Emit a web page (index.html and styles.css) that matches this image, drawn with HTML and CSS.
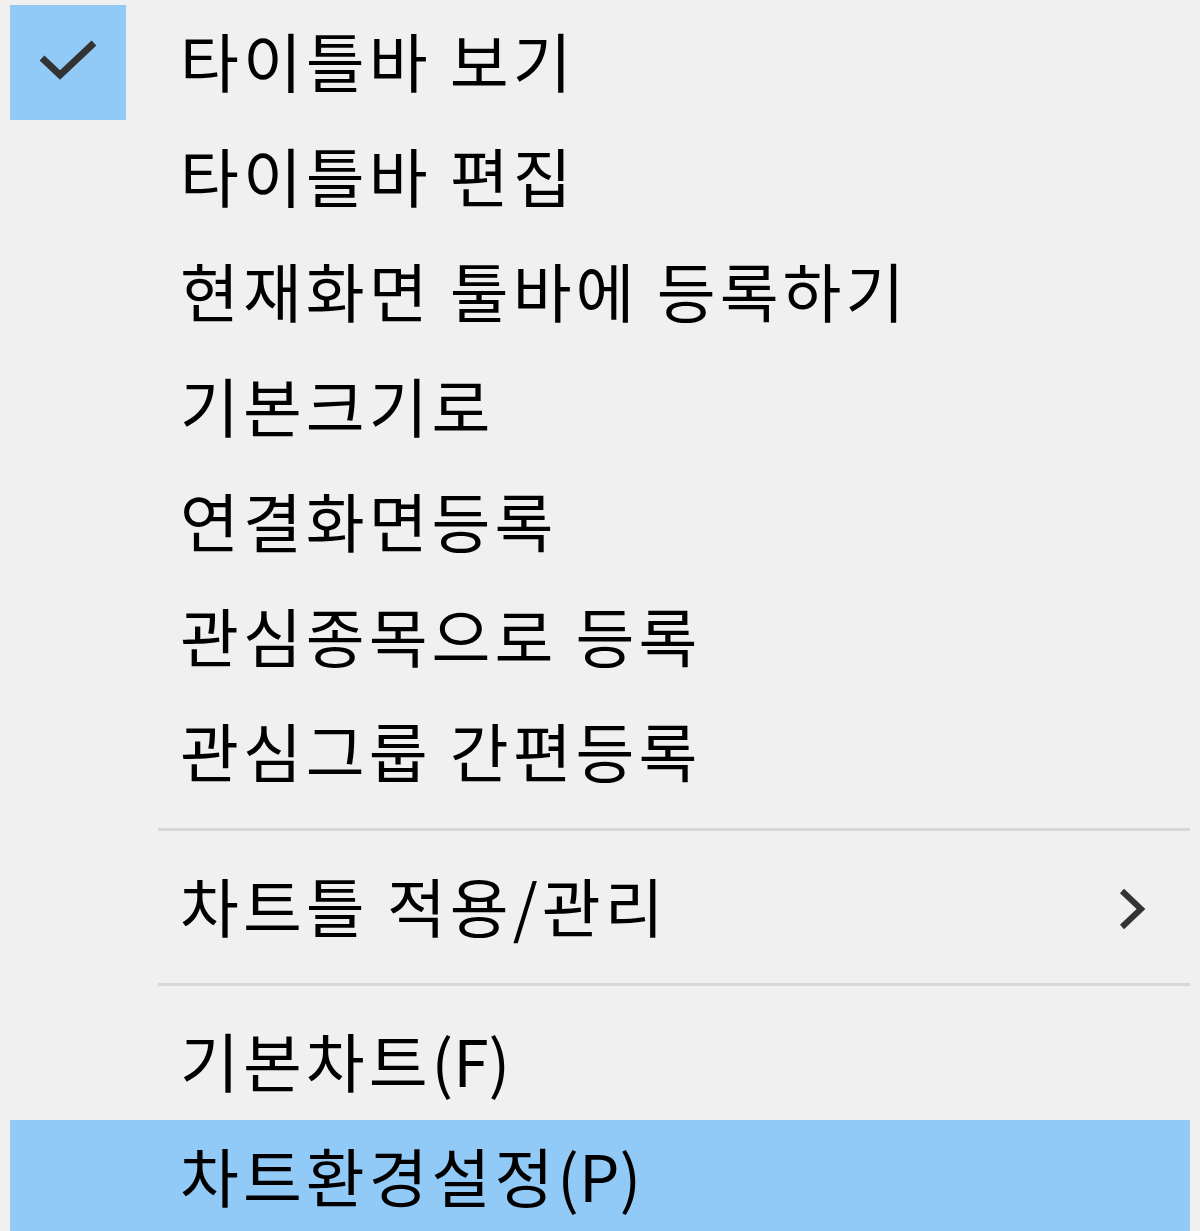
FILE: index.html
```html
<!DOCTYPE html>
<html>
<head>
    <meta charset="utf-8">
    <link rel="stylesheet" href="styles.css">
</head>
<body>
    <div class="menu">
        <div class="menu-item">
            <div class="gutter">
                <div class="check-box">
                    <svg width="116" height="115" viewBox="0 0 116 115">
                        <path d="M32 53 L50 70 L84 38" fill="none" stroke="#333" stroke-width="7"/>
                    </svg>
                </div>
            </div>
            <span class="label">타이틀바 보기</span>
        </div>
        <div class="menu-item">
            <div class="gutter"></div>
            <span class="label">타이틀바 편집</span>
        </div>
        <div class="menu-item">
            <div class="gutter"></div>
            <span class="label">현재화면 툴바에 등록하기</span>
        </div>
        <div class="menu-item">
            <div class="gutter"></div>
            <span class="label">기본크기로</span>
        </div>
        <div class="menu-item">
            <div class="gutter"></div>
            <span class="label">연결화면등록</span>
        </div>
        <div class="menu-item">
            <div class="gutter"></div>
            <span class="label">관심종목으로 등록</span>
        </div>
        <div class="menu-item">
            <div class="gutter"></div>
            <span class="label">관심그룹 간편등록</span>
        </div>

        <div class="separator"></div>

        <div class="menu-item">
            <div class="gutter"></div>
            <span class="label">차트틀 적용/관리</span>
            <svg class="arrow" width="40" height="50" viewBox="0 0 40 50">
                <path d="M10 8 L29 26 L10 44" fill="none" stroke="#333" stroke-width="6"/>
            </svg>
        </div>

        <div class="separator"></div>

        <div class="menu-item">
            <div class="gutter"></div>
            <span class="label">기본차트<span class="key">(F)</span></span>
        </div>
        <div class="menu-item selected">
            <div class="gutter"></div>
            <span class="label">차트환경설정<span class="key">(P)</span></span>
        </div>
    </div>
</body>
</html>
```

FILE: styles.css
```css
html, body{
    margin: 0;
    height: 100%;
    overflow: hidden;
}

body{
    background-color: #f0f0f0;
    font-family: 'Noto Sans CJK KR', 'Noto Sans', sans-serif;
    color: #000;
}

.menu{
    padding: 5px 10px 0 10px;
}

.menu-item{
    display: flex;
    align-items: center;
    height: 115px;
}

.menu-item.selected{
    background-color: #91c9f7;
}

.gutter{
    width: 170px;
    height: 100%;
    flex-shrink: 0;
}

.check-box{
    width: 116px;
    height: 115px;
    background-color: #91c9f7;
}

.check-box svg{
    display: block;
}

.label{
    font-size: 64px;
    letter-spacing: 4px;
    line-height: 1;
    flex: 1;
    white-space: nowrap;
    position: relative;
    top: -4px;
}

.key{
    letter-spacing: 0;
}

.arrow{
    margin-right: 38px;
    display: block;
}

.separator{
    height: 3px;
    margin: 18px 0 19px 148px;
    background-color: #d7d7d7;
}
```
